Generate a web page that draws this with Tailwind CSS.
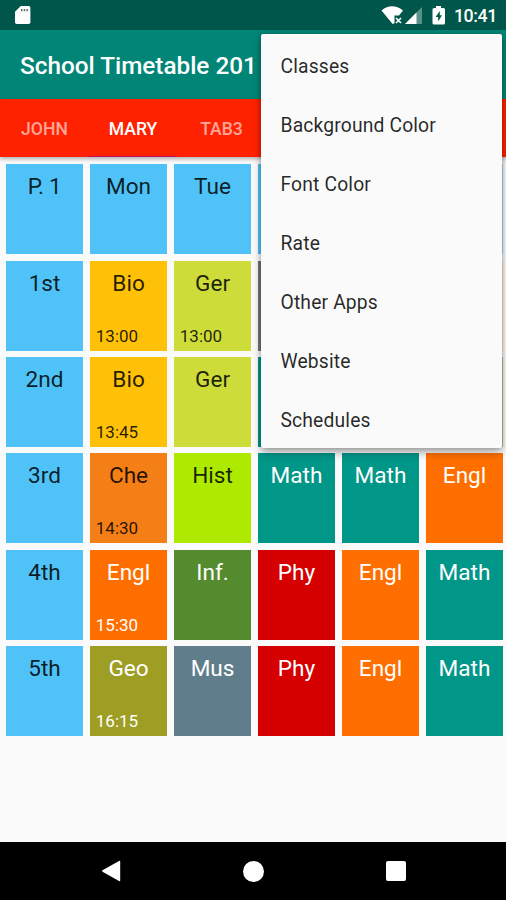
<!DOCTYPE html>
<html lang="en">
<head>
<meta charset="utf-8">
<title>School Timetable</title>
<script src="https://cdn.jsdelivr.net/npm/@tailwindcss/browser@4"></script>
</head>
<body class="bg-black font-['Roboto',sans-serif]">
<div class="relative flex h-[900px] w-[506px] flex-col overflow-hidden bg-[#fafafa]">
  <!-- Status bar -->
  <header class="flex h-[30px] shrink-0 items-center bg-[#00564a] pl-[14px] pr-[9px] text-white">
    <svg class="h-5 w-[18px]" viewBox="0 0 18 20" fill="currentColor"><path d="M6.800 1H14.600Q16.400 1 16.400 2.800V17.200Q16.400 19 14.600 19H2.800Q1 19 1 17.200V6.800Z"/><path d="M7 4h1.500v2.200H7zM9.700 4h1.500v2.200H9.700zM12.400 4h1.500v2.200h-1.500z" fill="#58766f"/></svg>
    <div class="ml-auto flex items-center">
      <svg class="h-5 w-[43px]" viewBox="0 0 43 20" fill="currentColor"><path d="M0.500 5.500Q11 -2.800 22 5.500L18 10.500H13.500V18.200L11.600 19Z"/><path d="M15 13l5 5M20 13l-5 5" stroke="currentColor" stroke-width="1.700"/><path d="M41 2V19H24Z" opacity=".35"/><path d="M35.500 7.500V19H24Z"/></svg>
      <svg class="ml-[8px] h-5 w-[14px]" viewBox="0 0 14 20" fill="currentColor"><path d="M4 1H9V3H11.500Q13 3 13 4.500V18Q13 19.500 11.500 19.500H2Q.5 19.500 .5 18V4.500Q.5 3 2 3H4Z"/><path d="M7.800 6L3.600 12H6.200V16.500L10 10.300H7.800Z" fill="#00564a"/></svg>
      <span class="ml-[8px] text-[17.800px] leading-5 font-medium tracking-[-0.400px] pt-px">10:41</span>
    </div>
  </header>
  <!-- App bar -->
  <div class="flex h-[69px] shrink-0 items-center bg-[#008577] pl-5 pt-[3px]">
    <h1 class="whitespace-nowrap text-[24.300px] font-medium text-white">School Timetable 201</h1>
  </div>
  <!-- Tabs -->
  <nav class="grid h-[58px] shrink-0 grid-cols-[89px_88px_89px_1fr] bg-[#ff2200] text-center text-[17.600px] leading-[60px] font-medium text-white/60 shadow-[0_2px_4px_rgba(0,0,0,0.3)]">
    <span class="h-[58px]">JOHN</span><span class="h-[58px] border-b border-[#c01060] text-white">MARY</span><span class="h-[58px]">TAB3</span>
  </nav>
  <!-- Timetable -->
  <main class="mt-[7.300px] ml-[5.800px] grid w-[497.500px] shrink-0 grid-cols-6 gap-x-[6.500px] gap-y-[6.350px] auto-rows-[90px] text-center text-[22.600px] leading-[27px] text-black/85">
    <div class="bg-[#4fc3f7] pt-[9px] tracking-[-0.300px]">P. 1</div>
    <div class="bg-[#4fc3f7] pt-[9px]">Mon</div>
    <div class="bg-[#4fc3f7] pt-[9px]">Tue</div>
    <div class="bg-[#4fc3f7]"></div>
    <div class="bg-[#4fc3f7]"></div>
    <div class="bg-[#a9dcf5]"></div>

    <div class="bg-[#4fc3f7] pt-[9px]">1st</div>
    <div class="flex flex-col justify-between bg-[#ffc107] pt-[9px] pb-[5px]">Bio<span class="pl-[6px] text-left text-[17px] leading-5">13:00</span></div>
    <div class="flex flex-col justify-between bg-[#cddc39] pt-[9px] pb-[5px]">Ger<span class="pl-[6px] text-left text-[17px] leading-5">13:00</span></div>
    <div class="bg-[#757575]"></div>
    <div class="bg-[#757575]"></div>
    <div class="bg-[#ffe0b2]"></div>

    <div class="bg-[#4fc3f7] pt-[9px]">2nd</div>
    <div class="flex flex-col justify-between bg-[#ffc107] pt-[9px] pb-[5px]">Bio<span class="pl-[6px] text-left text-[17px] leading-5">13:45</span></div>
    <div class="bg-[#cddc39] pt-[9px]">Ger</div>
    <div class="bg-[#009688]"></div>
    <div class="bg-[#009688]"></div>
    <div class="bg-[#b4c47e]"></div>

    <div class="bg-[#4fc3f7] pt-[9px]">3rd</div>
    <div class="flex flex-col justify-between bg-[#f57f17] pt-[9px] pb-[5px]">Che<span class="pl-[6px] text-left text-[17px] leading-5">14:30</span></div>
    <div class="bg-[#aeea00] pt-[9px]">Hist</div>
    <div class="bg-[#009688] pt-[9px] text-white">Math</div>
    <div class="bg-[#009688] pt-[9px] text-white">Math</div>
    <div class="bg-[#ff6f00] pt-[9px] text-white">Engl</div>

    <div class="bg-[#4fc3f7] pt-[9px]">4th</div>
    <div class="flex flex-col justify-between bg-[#ff6f00] pt-[9px] pb-[5px] text-white">Engl<span class="pl-[6px] text-left text-[17px] leading-5">15:30</span></div>
    <div class="bg-[#558b2f] pt-[9px] text-white">Inf.</div>
    <div class="bg-[#d50000] pt-[9px] text-white">Phy</div>
    <div class="bg-[#ff6f00] pt-[9px] text-white">Engl</div>
    <div class="bg-[#009688] pt-[9px] text-white">Math</div>

    <div class="bg-[#4fc3f7] pt-[9px]">5th</div>
    <div class="flex flex-col justify-between bg-[#9e9d24] pt-[9px] pb-[5px] text-white">Geo<span class="pl-[6px] text-left text-[17px] leading-5">16:15</span></div>
    <div class="bg-[#607d8b] pt-[9px] text-white">Mus</div>
    <div class="bg-[#d50000] pt-[9px] text-white">Phy</div>
    <div class="bg-[#ff6f00] pt-[9px] text-white">Engl</div>
    <div class="bg-[#009688] pt-[9px] text-white">Math</div>
  </main>
  <!-- Navigation bar -->
  <footer class="mt-auto grid h-[58px] shrink-0 grid-cols-[182px_142px_1fr] items-center bg-black text-white">
    <svg class="ml-[101px] h-[22px] w-5" viewBox="0 0 20 22" fill="currentColor"><path d="M1.500 10.200L18 .9Q19.200 .3 19.200 1.500V20.500Q19.200 21.700 18 21L1.500 11.800Q.5 11 1.500 10.200Z"/></svg>
    <div class="ml-[61px] size-[21px] rounded-full bg-white"></div>
    <div class="ml-[62px] size-[20px] rounded-[2px] bg-white"></div>
  </footer>

  <!-- Overflow menu -->
  <ul class="absolute left-[261px] top-[34px] flex h-[414px] w-[241px] flex-col rounded-[2px] bg-[#fafafa] pt-[2.500px] pl-[19.500px] text-[19.300px] leading-[59px] tracking-[0.150px] text-black/85 shadow-[0_5px_9px_rgba(0,0,0,0.3),0_0_5px_rgba(0,0,0,0.2)]">
    <li>Classes</li>
    <li>Background Color</li>
    <li>Font Color</li>
    <li>Rate</li>
    <li>Other Apps</li>
    <li>Website</li>
    <li>Schedules</li>
  </ul>
</div>
</body>
</html>
